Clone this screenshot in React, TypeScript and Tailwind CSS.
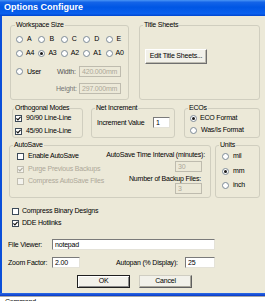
import React from "react";

const Radio = ({ checked = false }: { checked?: boolean }) => (
  <span className="w-[7px] h-[7px] rounded-full border border-[#7d8a96] bg-white flex items-center justify-center shrink-0">
    {checked && <span className="w-[3px] h-[3px] rounded-full bg-[#1a1a1a]" />}
  </span>
);

const Check = ({ checked = false, disabled = false }: { checked?: boolean; disabled?: boolean }) => (
  <span
    className={`w-[7px] h-[7px] border flex items-center justify-center shrink-0 ${
      disabled ? "border-[#c2bfb2] bg-[#f4f3ee]" : "border-[#3c4a58] bg-white"
    }`}
  >
    {checked && (
      <svg width="5" height="5" viewBox="0 0 5 5">
        <path d="M0.4 2.4 L1.9 3.9 L4.6 0.9" fill="none" stroke={disabled ? "#aeab9c" : "#111"} strokeWidth="1.2" />
      </svg>
    )}
  </span>
);

const Group = ({
  label,
  className = "",
  labelClass = "left-[3px]",
  children,
}: {
  label: string;
  className?: string;
  labelClass?: string;
  children?: React.ReactNode;
}) => (
  <div className={`relative border border-[#D0CEBF] rounded-[3px] shrink-0 ${className}`}>
    <span className={`absolute top-[-5px] px-[1px] bg-[#ECE9D8] leading-[8px] whitespace-nowrap ${labelClass}`}>{label}</span>
    {children}
  </div>
);

const Field = ({ value, disabled = false, className = "" }: { value: string; disabled?: boolean; className?: string }) => (
  <div
    className={`h-[11px] shrink-0 flex items-center pl-[2px] leading-none overflow-hidden whitespace-nowrap ${
      disabled
        ? "bg-[#ECE9D8] text-[#ACA899] border border-[#BEBBAE]"
        : "bg-white border border-t-[#7a7a7a] border-l-[#7a7a7a] border-b-[#e4e2d8] border-r-[#e4e2d8]"
    } ${className}`}
  >
    {value}
  </div>
);

const Lbl = ({ children, className = "" }: { children: React.ReactNode; className?: string }) => (
  <span className={`leading-[8px] whitespace-nowrap ${className}`}>{children}</span>
);

export default function App() {
  return (
    <div className="w-[265px] h-[301px] overflow-hidden bg-[#ECE9D8] text-[7px] tracking-[-0.2px] text-black font-['Liberation_Sans',Arial,sans-serif] flex flex-col">
      {/* title bar */}
      <div className="h-[16px] shrink-0 flex items-center pl-[4px] text-white font-bold text-[9px] tracking-normal bg-[linear-gradient(to_bottom,#4A95F5_0%,#1464E8_14%,#0056E4_45%,#0A60EE_85%,#0045CE_100%)]">
        Options Configure
      </div>

      {/* body */}
      <div className="h-[277px] shrink-0 flex">
        <div className="w-[2px] shrink-0 bg-[#0B4FD9]" />
        <div className="flex-1 flex flex-col overflow-hidden">
          {/* Row A */}
          <div className="flex mt-[9px]">
            <Group label="Workspace Size" labelClass="left-[4px]" className="ml-[8px] w-[119px] h-[75px]">
              <div className="flex flex-col pt-[9px] pl-[5px]">
                <div className="flex h-[8px]">
                  {["A", "B", "C", "D", "E"].map((l) => (
                    <div key={l} className="w-[22.4px] shrink-0 flex items-center gap-[4px]">
                      <Radio />
                      <Lbl>{l}</Lbl>
                    </div>
                  ))}
                </div>
                <div className="flex h-[8px] mt-[6px]">
                  {["A4", "A3", "A2", "A1", "A0"].map((l) => (
                    <div key={l} className="w-[22.4px] shrink-0 flex items-center gap-[3px]">
                      <Radio checked={l === "A3"} />
                      <Lbl>{l}</Lbl>
                    </div>
                  ))}
                </div>
                <div className="flex items-center h-[11px] mt-[9px]">
                  <div className="w-[41px] shrink-0 flex items-center gap-[4px]">
                    <Radio />
                    <Lbl>User</Lbl>
                  </div>
                  <Lbl className="w-[22px] shrink-0 text-[#555]">Width:</Lbl>
                  <Field disabled value="420.000mm" className="w-[42px]" />
                </div>
                <div className="flex items-center h-[11px] mt-[6px] pl-[40px]">
                  <Lbl className="w-[23px] shrink-0 text-[#777]">Height:</Lbl>
                  <Field disabled value="297.000mm" className="w-[42px]" />
                </div>
              </div>
            </Group>
            <Group label="Title Sheets" className="ml-[10px] w-[121px] h-[75px]">
              <div className="pt-[23px] pl-[5px]">
                <div className="w-[62px] h-[15px] flex items-center justify-center bg-[#F2F1EA] border border-t-white border-l-white border-r-[#6f6f6f] border-b-[#6f6f6f] shadow-[inset_-1px_-1px_0_#bdbbb0] whitespace-nowrap">
                  Edit Title Sheets...
                </div>
              </div>
            </Group>
          </div>

          {/* Row B */}
          <div className="flex mt-[8px]">
            <Group label="Orthogonal Modes" labelClass="left-[1px]" className="ml-[10px] w-[71px] h-[30px]">
              <div className="flex flex-col pt-[5px] pl-[2px]">
                <div className="flex items-center h-[8px] gap-[4px]">
                  <Check checked />
                  <Lbl>90/90 Line-Line</Lbl>
                </div>
                <div className="flex items-center h-[8px] gap-[4px] mt-[5px]">
                  <Check checked />
                  <Lbl>45/90 Line-Line</Lbl>
                </div>
              </div>
            </Group>
            <Group label="Net Increment" className="ml-[8px] w-[84px] h-[30px]">
              <div className="flex items-center h-[11px] mt-[8px] pl-[5px]">
                <Lbl className="w-[56px] shrink-0">Increment Value</Lbl>
                <Field value="1" className="w-[17px]" />
              </div>
            </Group>
            <Group label="ECOs" className="ml-[9px] w-[76px] h-[30px]">
              <div className="flex flex-col pt-[5px] pl-[5px]">
                <div className="flex items-center h-[8px] gap-[3px]">
                  <Radio checked />
                  <Lbl>ECO Format</Lbl>
                </div>
                <div className="flex items-center h-[8px] gap-[4px] mt-[4px]">
                  <Radio />
                  <Lbl>Was/Is Format</Lbl>
                </div>
              </div>
            </Group>
          </div>

          {/* Row C */}
          <div className="flex mt-[7px]">
            <Group label="AutoSave" className="ml-[7px] w-[202px] h-[53px] flex">
              <div className="flex flex-col pt-[6px] pl-[7px]">
                <div className="flex items-center h-[8px] gap-[4px]">
                  <Check />
                  <Lbl>Enable AutoSave</Lbl>
                </div>
                <div className="flex items-center h-[8px] gap-[4px] mt-[5px] text-[#ACA899]">
                  <Check checked disabled />
                  <Lbl>Purge Previous Backups</Lbl>
                </div>
                <div className="flex items-center h-[8px] gap-[4px] mt-[4px] text-[#ACA899]">
                  <Check disabled />
                  <Lbl>Compress AutoSave Files</Lbl>
                </div>
              </div>
              <div className="ml-auto flex flex-col items-end pt-[5px] pr-[8px]">
                <Lbl className="mr-[-3px]">AutoSave Time Interval (minutes):</Lbl>
                <Field disabled value="30" className="w-[27px] mt-[2px]" />
                <Lbl className="mt-[3px] mr-[1px]">Number of Backup Files:</Lbl>
                <Field disabled value="3" className="w-[27px]" />
              </div>
            </Group>
            <Group label="Units" className="ml-[4px] w-[45px] h-[53px]">
              <div className="flex flex-col pt-[6px] pl-[6px]">
                <div className="flex items-center h-[8px] gap-[4px]">
                  <Radio />
                  <Lbl>mil</Lbl>
                </div>
                <div className="flex items-center h-[8px] gap-[4px] mt-[7px]">
                  <Radio checked />
                  <Lbl>mm</Lbl>
                </div>
                <div className="flex items-center h-[8px] gap-[4px] mt-[6px]">
                  <Radio />
                  <Lbl>inch</Lbl>
                </div>
              </div>
            </Group>
          </div>

          {/* checkboxes */}
          <div className="flex items-center h-[8px] gap-[3px] mt-[9px] ml-[10px]">
            <Check />
            <Lbl>Compress Binary Designs</Lbl>
          </div>
          <div className="flex items-center h-[8px] gap-[3px] mt-[4px] ml-[10px]">
            <Check checked />
            <Lbl>DDE Hotlinks</Lbl>
          </div>

          {/* fields */}
          <div className="flex items-center h-[11px] mt-[12px] ml-[6px]">
            <Lbl className="w-[44px] shrink-0">File Viewer:</Lbl>
            <Field value="notepad" className="w-[163px]" />
          </div>
          <div className="flex items-center h-[11px] mt-[7px] ml-[6px]">
            <Lbl className="w-[44px] shrink-0">Zoom Factor:</Lbl>
            <Field value="2.00" className="w-[28px]" />
            <Lbl className="ml-[36px] w-[69px] shrink-0">Autopan (% Display):</Lbl>
            <Field value="25" className="w-[30px]" />
          </div>

          {/* buttons */}
          <div className="flex mt-[7px]">
            <div className="ml-[75px] w-[53px] h-[13px] flex items-center justify-center bg-[#F2F1EA] border border-[#1f1f1f] shadow-[inset_1px_1px_0_#ffffff,inset_-1px_-1px_0_#8a8a8a]">
              OK
            </div>
            <div className="ml-[9px] w-[53px] h-[13px] flex items-center justify-center bg-[#F2F1EA] border border-t-[#cfcdc2] border-l-[#cfcdc2] border-r-[#5f5f5f] border-b-[#5f5f5f] shadow-[inset_-1px_-1px_0_#a8a69b]">
              Cancel
            </div>
          </div>
        </div>
      </div>

      {/* bottom frame */}
      <div className="h-[3px] shrink-0 bg-[linear-gradient(to_bottom,#2C6BE6,#0839C8)]" />
      <div className="flex-1 bg-white border-t border-[#a9a9a9] pl-[5px] pt-[1px] leading-[8px]">Command</div>
    </div>
  );
}
